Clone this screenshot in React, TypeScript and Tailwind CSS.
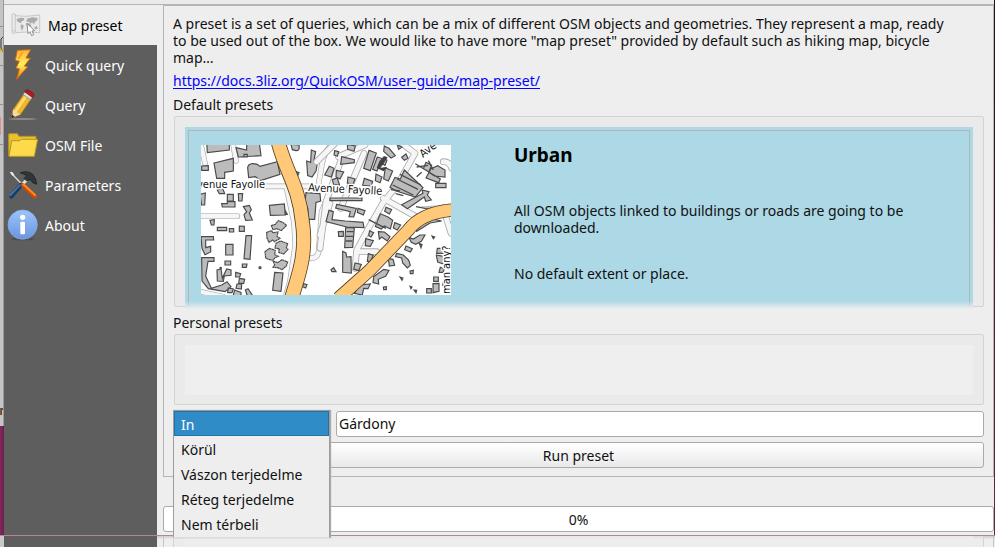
import type { ReactNode } from 'react';

const outline = { stroke: '#4a4a4a', strokeWidth: 3.5, fill: '#bcbcbc' };

function MapPicture() {
  return (
    <svg viewBox="0 0 250 150" className="block h-[150px] w-[250px] shrink-0 bg-white" role="img" aria-label="Street map">
      <g transform="translate(-11 -10) scale(.33333)">
        <g fill="none" strokeLinecap="round" strokeLinejoin="round">
          <path d="M20 243H142M225 154H360M290 160L312 262L316 330L300 440L285 490M128 20L138 78M33 30L45 85M420 35C395 60 395 100 385 150M420 170L395 230L386 350Q382 372 355 370M30 470L100 485" stroke="#aaa" strokeWidth="17" />
          <path d="M20 243H142M225 154H360M290 160L312 262L316 330L300 440L285 490M128 20L138 78M33 30L45 85M420 35C395 60 395 100 385 150M420 170L395 230L386 350Q382 372 355 370M30 470L100 485" stroke="#f6f6f6" strokeWidth="13" />
        </g>
        <g {...outline}>
          <path d="M50 20H118V45L52 53ZM138 38L170 45V25H208L213 62L145 66ZM162 58H172V66H162ZM72 84L130 70V108L104 112V130H80ZM173 98C175 82 198 83 210 94L262 80L270 118L212 137L196 125L176 128Z" />
          <path d="M35 93L55 92V106H35ZM30 178L46 174L44 210H35ZM82 165L98 160L104 176H88ZM112 178H130V198H112ZM95 206H112V200H135V216H97ZM145 176H158L156 198H146ZM160 215L178 211L184 224L178 234L187 255L167 256L162 239L170 230Z" />
          <path d="M238 211L283 207L286 240L241 241ZM285 225L292 238H285ZM60 256L73 254L72 270L64 270ZM82 277H110V287H82ZM118 281H131V291H118ZM148 273L163 274V289H148ZM168 302H185L180 373L162 371ZM107 328H129V360H107Z" />
          <path d="M244 272L256 268L265 257L278 262L290 271L281 280L274 287L260 281L249 284ZM230 292L244 287L249 293L264 291L261 304L270 310L254 320L248 315L237 322L231 309ZM258 325L272 318L293 326L289 338L294 343L281 357L266 352L268 342L255 339ZM225 350L238 340L256 346L254 359L265 364L254 369L249 376L238 374L227 369ZM249 378L263 383L276 374L293 381L289 393L276 404L263 398L249 397L254 389Z" strokeDasharray="7 1" />
          <path d="M33 305H70L71 315H47V338L62 334V351L45 359L36 340ZM35 368H72V379H54L47 423L64 460L95 450L111 440L123 455L105 470L55 461L36 438ZM105 378H122V390H105ZM81 405L93 401L97 430L110 402L123 405V421L103 423L100 439L82 438ZM137 412L152 416L149 426H137ZM157 387H171L169 397H157ZM148 430L164 433L161 445H146ZM141 447H155L154 462L138 460ZM134 465L153 472V484H129ZM115 459L130 462L126 473H113ZM166 465L174 461L188 482H172ZM254 412L279 414L273 469L248 466ZM340 446L351 449L347 459L338 455Z" />
          <path d="M303 28L327 30Q330 48 318 47L307 44ZM350 78L362 82L364 45L377 50L372 76L383 79L378 108L366 126L353 122ZM320 110L327 113L322 125ZM348 173L390 176L392 198L378 202L374 253H353L354 223L345 201ZM413 225L425 228V262L407 260Z" />
          <circle cx="92" cy="399" r="2" /><circle cx="210" cy="398" r="3" />
        </g>
        <path d="M263 15C287 112 326 150 337 260C353 364 319 436 302 500" fill="none" stroke="#514020" strokeWidth="45" />
        <path d="M263 15C287 112 326 150 337 260C353 364 319 436 302 500" fill="none" stroke="#ffc979" strokeWidth="40" />
      </g>
      <g transform="translate(119 -10) scale(.33333)">
        <g fill="none" strokeLinecap="round" strokeLinejoin="round">
          <path d="M-10 80L45 25M55 65L135 30M132 55L62 220M245 25L285 55L232 150L188 205L148 275L110 345L105 400M190 190L285 243M65 70L18 200L0 340M120 350L170 350M370 80Q390 80 395 100M378 247L393 295M30 205L0 300" stroke="#aaa" strokeWidth="20" />
          <path d="M-10 80L45 25M55 65L135 30M132 55L62 220M245 25L285 55L232 150L188 205L148 275L110 345L105 400M190 190L285 243M65 70L18 200L0 340M120 350L170 350M370 80Q390 80 395 100M378 247L393 295M30 205L0 300" stroke="#f6f6f6" strokeWidth="15" />
        </g>
        <g {...outline}>
          <path d="M82 28L106 33L102 49L83 43ZM44 47L56 50L52 64L42 60ZM65 65L103 74V83L62 88ZM28 94L42 100L34 126L14 120ZM49 106L71 111L60 132L48 126ZM147 46L169 54L151 107L131 100ZM172 66L201 75L195 91L182 83L171 108L158 103ZM196 98L218 108L205 138L191 132ZM193 33L207 40L226 62L213 69L191 49ZM245 67L258 57L264 70L253 76ZM232 30L246 36L236 43Z" />
          <path d="M168 117L186 126L180 143L166 137ZM133 130L158 139L154 153L128 151ZM37 134L52 129L59 151L41 149ZM84 126L105 132L99 148L82 144ZM253 105L309 158L286 186L229 168L210 157L225 127L241 132ZM286 86L310 101L318 82L335 91L326 111L343 123L375 126V105L353 92L333 101L318 129L356 143L361 132ZM347 145H378V158H347Z" />
          <path d="M245 209L309 175L306 165L327 170L322 180L334 195L317 199L313 186L262 221ZM30 189H126V197H30ZM50 208L109 220L101 246L87 245L91 230L47 219ZM27 226L40 230L36 254L76 258L129 262L132 278L80 276L18 260ZM114 220L135 227L130 240L112 232ZM198 217L215 224L208 237L194 229ZM181 236L204 246L218 256L211 282L193 273L184 282L166 274ZM224 263L242 270L232 285L220 279ZM77 277L103 279L98 337L74 338ZM55 290L70 289V304H56ZM149 287L161 293L153 306L146 302ZM175 290L193 291L210 305L202 318L185 306L178 312Z" />
          <path d="M137 311L160 317L151 334L136 332ZM145 356L160 361L151 379H142ZM68 349L78 354L80 366L93 365L94 414L68 412ZM105 384L124 388L116 407L101 402ZM33 404L41 398L48 410H36ZM161 425L191 403L207 406L197 424L175 433L176 447L159 443ZM120 450L151 447L144 461L131 460L127 480L103 475ZM205 371L219 373L224 391L208 393ZM258 333L277 341L271 351L254 344ZM230 355L250 360L266 375L271 391L262 399L248 384L245 369L226 365ZM266 307L280 312L300 300L315 300L304 319L287 328L274 322Z" />
          <path d="M352 340H377L375 355H350ZM349 360L370 364V387L353 381ZM341 426H355V439H341ZM339 446L357 445V469L339 473ZM320 461H334V474H320ZM372 433L382 428V451H368ZM361 397L373 402L369 412H357ZM270 408L280 406L279 416H271ZM298 326L306 328L303 338ZM336 303L344 306L340 311ZM240 426L249 429L246 436ZM190 456L199 455V464H191ZM270 454L276 456L273 461ZM282 465L290 466L288 473Z" />
          <path d="M360 215L392 211L391 234L360 229ZM288 215L323 222L370 210M285 275L330 250L365 258L330 264L290 289Z" />
        </g>
        <path d="M170 99L178 79L192 63L203 67L188 90L181 98L202 96L191 109Z" fill="#414141" />
        <g stroke="#4b4b4b" strokeWidth="4">
          <path d="M231 132L294 163M218 150L280 180M240 118L303 150M227 176L250 182M213 164L240 168M325 77L340 105M290 96L324 91M80 290H101M78 304H99M77 318H97M146 254L198 280M305 112L290 125" fill="none" />
        </g>
        <path d="M55 490L150 405L265 285Q306 230 410 224" fill="none" stroke="#514020" strokeWidth="40" />
        <path d="M55 490L150 405L265 285Q306 230 410 224" fill="none" stroke="#ffc979" strokeWidth="35" />
      </g>
      <g fontSize="11" fill="#111" stroke="#fff" strokeWidth="3" strokeLinejoin="round" style={{ paintOrder: 'stroke' }} className="font-['DejaVu_Sans_Condensed','DejaVu_Sans',sans-serif]">
        <text x="-4" y="43">venue Fayolle</text>
        <text x="107" y="46" transform="rotate(3 107 46)">Avenue Fayolle</text>
        <text x="222" y="13" transform="rotate(-38 222 13)">Ave</text>
        <text x="249" y="149" transform="rotate(-90 249 149)">man any?</text>
      </g>
    </svg>
  );
}

function Icon({ box, children }: { box: string; children: ReactNode }) {
  return <svg viewBox={box} className="size-8 shrink-0" aria-hidden="true">{children}</svg>;
}

const items: { label: string; icon: ReactNode }[] = [
  {
    label: 'Map preset',
    icon: (
      <Icon box="30 27 96 96">
        <path d="M36 43Q41 38 46 43V47L78 49L119 45V98L82 96L47 98Q41 104 36 98Z" fill="#e9e9e9" stroke="#b7b7b7" strokeWidth="2" />
        <path d="M46 44V97M36 94Q41 89 47 94" fill="none" stroke="#bbb" strokeWidth="2" />
        <path d="M50 57L62 53L74 55L70 62L65 64L62 70L55 66L51 63ZM63 73L71 76L70 83L66 92L62 82ZM81 56L97 52L113 54L111 62L105 65L102 73L96 67L92 71L87 66L79 65ZM80 69L91 71L94 78L89 90L84 80L79 77ZM103 81L111 79L113 87L105 88Z" fill="#aaa" />
        <path d="M81 70L84 101L90 95L95 107L101 104L96 93L104 92Z" fill="#fff" stroke="#777" strokeWidth="2.5" />
      </Icon>
    ),
  },
  {
    label: 'Quick query',
    icon: (
      <Icon box="21 147 96 96">
        <defs><linearGradient id="bolt" x1="0" y1="0" x2="0" y2="1"><stop stopColor="#ffb43c" /><stop offset=".5" stopColor="#fff05a" /><stop offset="1" stopColor="#f27610" /></linearGradient></defs>
        <path d="M52 151L92 149L78 174L91 175L73 198L83 200L50 238L58 207L48 204L58 184L46 181Z" fill="url(#bolt)" stroke="#d5680f" strokeWidth="3" strokeLinejoin="round" />
        <path d="M54 178L68 156" fill="none" stroke="#ffa02a" strokeWidth="6" />
      </Icon>
    ),
  },
  {
    label: 'Query',
    icon: (
      <Icon box="21 267 96 96">
        <ellipse cx="68" cy="357" rx="42" ry="3" fill="#8a8a8a" />
        <path d="M39 329L72 281L94 296L62 343L37 353Z" fill="#f0b72d" stroke="#a57813" strokeWidth="2" />
        <path d="M49 331L78 288" stroke="#ffdc71" strokeWidth="8" />
        <path d="M39 329L50 330L53 340L62 343L37 353Z" fill="#f4d9a0" />
        <path d="M36 344L44 350L36 354Z" fill="#222" />
        <path d="M69 284L75 276L98 291L92 299Z" fill="#ddd" stroke="#777" strokeWidth="2" />
        <path d="M74 275Q77 267 85 270L98 278Q105 282 101 289L98 293Z" fill="#b51921" stroke="#79151a" strokeWidth="2" />
      </Icon>
    ),
  },
  {
    label: 'OSM File',
    icon: (
      <Icon box="21 12 96 96">
        <path d="M26 92V28Q26 26 28 26H52L57 34H108V46L103 94H28Z" fill="#e8c12d" stroke="#b29526" strokeWidth="3" />
        <path d="M35 47H60L64 43H113L103 94H27Z" fill="#fdda4c" stroke="#b29526" strokeWidth="3" />
      </Icon>
    ),
  },
  {
    label: 'Parameters',
    icon: (
      <Icon box="21 132 96 96">
        <path d="M34 145L68 180" stroke="#deded7" strokeWidth="4" />
        <path d="M29 142L36 140L43 149L39 153Z" fill="#eee" />
        <path d="M83 161L62 184" stroke="#dedede" strokeWidth="9" />
        <path d="M60 143Q84 135 98 148Q109 160 110 178L98 173L91 164L80 168L72 160L80 152Q72 147 60 143Z" fill="#303637" stroke="#171c1d" strokeWidth="2" />
        <path d="M63 180L34 214" stroke="#173b67" strokeWidth="13" strokeLinecap="round" />
        <path d="M60 180L31 211" stroke="#4976b0" strokeWidth="5" strokeLinecap="round" />
        <path d="M69 181L105 214" stroke="#cf4b05" strokeWidth="13" strokeLinecap="round" />
        <path d="M70 178L105 210" stroke="#ff8a26" strokeWidth="6" strokeLinecap="round" />
      </Icon>
    ),
  },
  {
    label: 'About',
    icon: (
      <Icon box="21 252 96 96">
        <defs><linearGradient id="info" x1="0" y1="0" x2="0" y2="1"><stop stopColor="#9ac5fb" /><stop offset="1" stopColor="#6c94df" /></linearGradient></defs>
        <ellipse cx="68" cy="342" rx="36" ry="4" fill="#4d4d4d" />
        <circle cx="68" cy="299" r="44" fill="url(#info)" stroke="#84aceb" strokeWidth="2" />
        <circle cx="68" cy="277" r="8" fill="#fff" />
        <rect x="61" y="290" width="14" height="38" rx="3" fill="#fff" />
      </Icon>
    ),
  },
];

const places = ['In', 'Körül', 'Vászon terjedelme', 'Réteg terjedelme', 'Nem térbeli'];

export default function App() {
  return (
    <div className="flex h-screen flex-col overflow-hidden bg-[#eee] font-['Noto_Sans','Open_Sans',sans-serif] text-[14px] leading-[17px] text-[#111]">
      <div className="flex min-h-0 flex-1">
        <div className="flex w-1 shrink-0 flex-col overflow-hidden bg-[#c4c4c4]" aria-hidden="true">
          <svg viewBox="0 0 4 426" className="h-[426px] w-1 shrink-0">
            <path d="M0 26.5H4M0 65.5H4M0 104.5H4M0 144.5H4" stroke="#929292" />
            <path d="M4 36L1 39V48L4 53" fill="none" stroke="#333" />
            <path d="M0 49L3 52" stroke="#d5ae20" strokeWidth="2" />
            <path d="M0 117H1V135H0Z" fill="#e58c8c" />
            <path d="M0 408H1V415H0Z" fill="#a34e19" />
            <path d="M1 408H4V410H2V415H1Z" fill="#3e5368" />
            <path d="M3.5 0V426" stroke="#999" />
          </svg>
          <div className="flex-1 bg-linear-to-r from-[#84295d] to-[#692049]" />
        </div>
        <div className="flex min-w-0 flex-1 flex-col">
          <div className="h-[5px] shrink-0 border-b border-[#b5b5b5] bg-[#eaeaea]" />
          <div className="flex min-h-0 flex-1">
            <nav className="w-[153px] shrink-0 bg-[#5e5e5e]">
              {items.map((item, i) => (
                <button
                  key={item.label}
                  type="button"
                  className={i === 0
                    ? 'flex h-10 w-full items-center gap-1.5 bg-[#eee] pl-1.5 text-left text-black'
                    : 'flex h-10 w-full items-center gap-1.5 pl-[3px] text-left text-white'}
                >
                  {item.icon}
                  {item.label}
                </button>
              ))}
            </nav>
            <main className="flex min-w-0 flex-1 flex-col pl-1.5">
              <section className="border border-[#b5b5b5] px-[9px] pt-[9px] pb-2">
                <p className="whitespace-nowrap">
                  A preset is a set of queries, which can be a mix of different OSM objects and geometries. They represent a map, ready<br />
                  to be used out of the box. We would like to have more "map preset" provided by default such as hiking map, bicycle<br />
                  map…
                </p>
                <a href="https://docs.3liz.org/QuickOSM/user-guide/map-preset/" className="mt-1.5 block w-fit text-[#00f] underline underline-offset-2">
                  https://docs.3liz.org/QuickOSM/user-guide/map-preset/
                </a>
                <h2 className="mt-[7px]">Default presets</h2>
                <div className="mt-[3px] ml-px h-[191px] rounded-xs border border-[#d3d3d3] bg-[#eaeaea] px-2.5 pt-2.5">
                  <article className="relative h-[182px] bg-[#add8e6] px-[3px] pt-[3px]">
                    <div className="flex h-[179px] gap-[63px] border border-b-0 border-[#b5b5b5] pt-3.5 pl-3">
                      <MapPicture />
                      <div>
                        <h3 className="text-[19px] leading-[20px] font-bold text-black">Urban</h3>
                        <p className="mt-[37px]">All OSM objects linked to buildings or roads are going to be<br />downloaded.</p>
                        <p className="mt-[29px]">No default extent or place.</p>
                      </div>
                    </div>
                    <div className="absolute inset-x-0 bottom-0 h-2 bg-linear-to-b from-transparent to-[#eee]" />
                  </article>
                </div>
                <h2 className="mt-[7px]">Personal presets</h2>
                <div className="mt-[3px] ml-px h-[71px] rounded-xs border border-[#d3d3d3] bg-[#eaeaea] p-2.5">
                  <div className="h-[50px] bg-[#efefef]" />
                </div>
                <div className="mt-1.5 flex gap-1.5">
                  <div className="relative h-[26px] w-[157px] shrink-0">
                    <select
                      size={5}
                      defaultValue="In"
                      aria-label="Place type"
                      className="absolute -top-px left-0 z-10 h-[128px] w-full overflow-hidden border border-[#9d9d9d] border-b-[#ddd] bg-[#eee] shadow-[1px_0_1px_#aaa] outline-none"
                    >
                      {places.map((place) => (
                        <option
                          key={place}
                          className="h-[25px] py-1 pr-0 pl-[7px] leading-[17px] [-webkit-text-fill-color:#111] checked:bg-linear-to-b checked:from-[#308cc6] checked:to-[#308cc6] checked:shadow-[inset_0_0_0_1px_#2472a5] checked:[-webkit-text-fill-color:#fff]"
                        >
                          {place}
                        </option>
                      ))}
                    </select>
                  </div>
                  <input aria-label="Place" defaultValue="Gárdony" className="h-[26px] min-w-0 flex-1 rounded-[3px] border border-[#aaa] bg-white px-0.5 pb-0.5 outline-none" />
                </div>
                <button type="button" className="mt-[5px] block h-[26px] w-full rounded-[3px] border border-[#aaa] bg-linear-to-b from-white to-[#e9e9e9]">
                  Run preset
                </button>
              </section>
              <div role="progressbar" aria-label="Progress" aria-valuenow={0} className="mt-[29px] flex h-[26px] shrink-0 items-center justify-center rounded-[3px] border border-[#aaa] bg-white">
                0%
              </div>
            </main>
          </div>
        </div>
        <div className="w-px shrink-0 bg-linear-to-b from-[#2c0a22] to-[#6d2146]" />
      </div>
      <div className="flex h-3 shrink-0 border-t border-[#a58f97] bg-[#eee]" aria-hidden="true">
        <div className="w-1 bg-[#c9c9c9]" />
        <div className="w-[153px] bg-[#5e5e5e] shadow-[inset_0_1px_1px_#735763]" />
        <div className="flex flex-1 bg-linear-to-b from-[#d8c6ca] to-[#eee] to-30% pr-px pl-1.5">
          <div className="flex flex-1 border-x border-[#c4c4c4] px-[9px]">
            <div className="flex flex-1 border-x border-[#d3d3d3] bg-[#eaeaea]/50 px-2.5">
              <div className="flex-1 bg-[#efefef]/60" />
            </div>
          </div>
        </div>
      </div>
    </div>
  );
}
